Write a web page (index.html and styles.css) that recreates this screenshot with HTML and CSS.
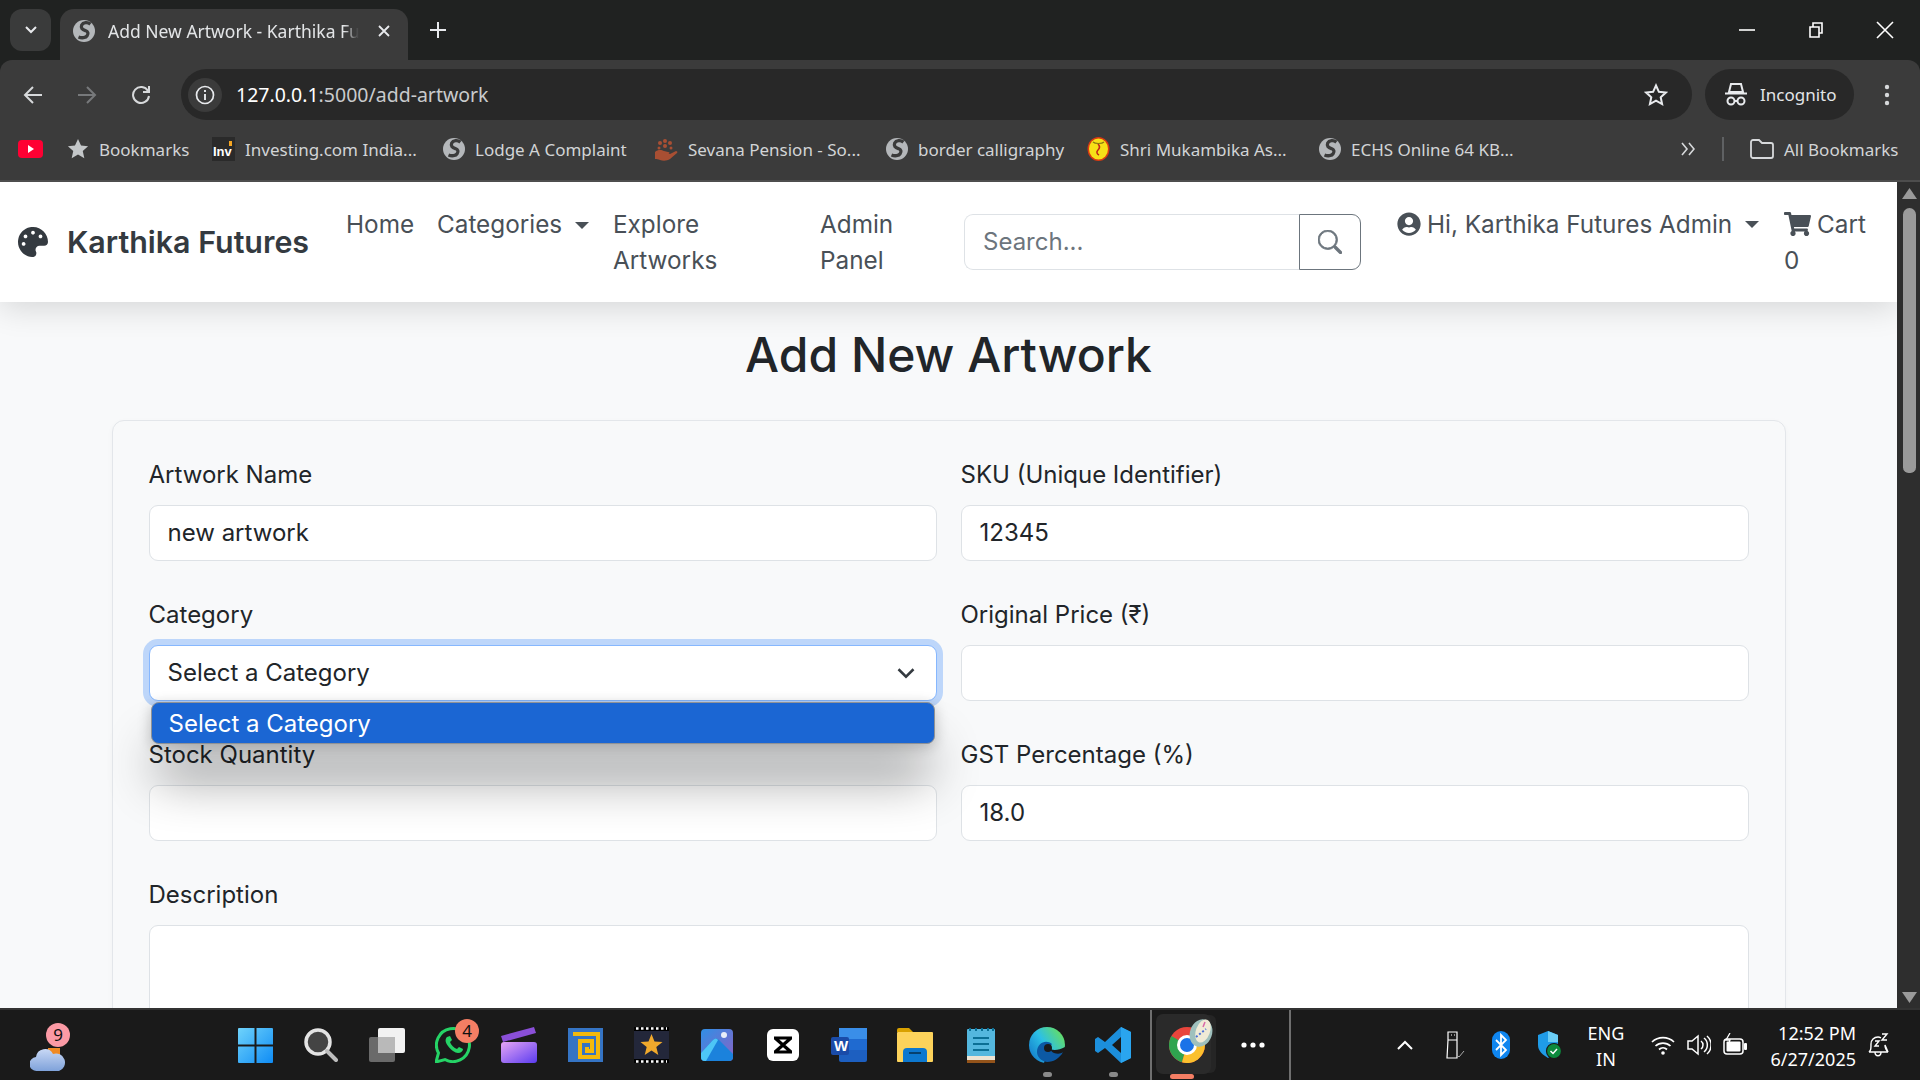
FILE: index.html
```html
<!DOCTYPE html>
<html lang="en">
<head>
<meta charset="utf-8">
<title>Add New Artwork - Karthika Futures</title>
<link rel="stylesheet" href="styles.css">
</head>
<body>
<svg class="defs" width="0" height="0" aria-hidden="true">
  <defs>
    <symbol id="globe" viewBox="0 0 24 24">
      <circle cx="12" cy="12" r="12" fill="#b4b7ba"/>
      <path d="M19 4.500c-3-2.500-8-2-9.500 1-1.300 3 .5 5 4 6 3 1 3.500 3.500 2 5.500-1.500 2.500-6 3-9.500 1.500" fill="none" stroke="#3b3b3b" stroke-width="3.600"/>
    </symbol>
  </defs>
</svg>

<header class="browser">
  <div class="tabstrip">
    <button class="tab-search"><svg width="14" height="10" viewBox="0 0 14 10"><path d="M2 2l5 5 5-5" fill="none" stroke="#e8eaed" stroke-width="2"/></svg></button>
    <div class="tab">
      <svg class="tab-globe"><use href="#globe"/></svg>
      <span class="tab-title">Add New Artwork - Karthika Futures</span>
      <svg class="tab-close" width="14" height="14" viewBox="0 0 14 14"><path d="M2 2l10 10M12 2L2 12" stroke="#e8eaed" stroke-width="1.800"/></svg>
    </div>
    <svg class="tab-new" width="16" height="16" viewBox="0 0 16 16"><path d="M8 0v16M0 8h16" stroke="#e8eaed" stroke-width="2"/></svg>
    <div class="win-controls">
      <svg width="16" height="16" viewBox="0 0 16 16"><path d="M0 8h16" stroke="#fff" stroke-width="1.600"/></svg>
      <svg width="16" height="16" viewBox="0 0 16 16"><path d="M2 5h9v10H2zM5 5V1h9v10h-3" fill="none" stroke="#fff" stroke-width="1.600"/></svg>
      <svg width="18" height="18" viewBox="0 0 18 18"><path d="M1 1l16 16M17 1L1 17" stroke="#fff" stroke-width="1.600"/></svg>
    </div>
  </div>
  <div class="toolbar">
    <div class="nav-btns">
      <svg width="20" height="20" viewBox="0 0 20 20"><path d="M19 10H2M10 2l-8 8 8 8" fill="none" stroke="#d7d9db" stroke-width="2"/></svg>
      <svg width="20" height="20" viewBox="0 0 20 20"><path d="M1 10h17M10 2l8 8-8 8" fill="none" stroke="#77797b" stroke-width="2"/></svg>
      <svg width="20" height="20" viewBox="0 0 20 20"><path d="M17 6a8 8 0 1 0 1 5M18 1v6h-6" fill="none" stroke="#d7d9db" stroke-width="2"/></svg>
    </div>
    <div class="omnibox">
      <span class="info-pill"><svg width="20" height="20" viewBox="0 0 20 20"><circle cx="10" cy="10" r="8.500" fill="none" stroke="#e8eaed" stroke-width="1.700"/><path d="M10 9v6M10 5v2" stroke="#e8eaed" stroke-width="1.900"/></svg></span>
      <span class="url"><b class="url-host">127.0.0.1</b>:5000/add-artwork</span>
      <svg class="omni-star" width="24" height="24" viewBox="0 0 24 24"><path d="M12 2.500l2.900 6.300 6.900.8-5.100 4.700 1.400 6.800-6.100-3.400-6.100 3.400 1.400-6.800-5.100-4.700 6.900-.8z" fill="none" stroke="#e8eaed" stroke-width="2"/></svg>
    </div>
    <div class="incognito">
      <svg width="22" height="24" viewBox="0 0 22 24"><path d="M6 1h10l2 8H4zM0 10.500h22" fill="none" stroke="#e8eaed" stroke-width="2"/><circle cx="6" cy="18" r="3.500" fill="none" stroke="#e8eaed" stroke-width="2"/><circle cx="16" cy="18" r="3.500" fill="none" stroke="#e8eaed" stroke-width="2"/><path d="M9 18h4" stroke="#e8eaed" stroke-width="2"/></svg>
      <span>Incognito</span>
    </div>
    <svg class="kebab" width="6" height="22" viewBox="0 0 6 22"><circle cx="3" cy="3" r="2.200" fill="#d7d9db"/><circle cx="3" cy="11" r="2.200" fill="#d7d9db"/><circle cx="3" cy="19" r="2.200" fill="#d7d9db"/></svg>
  </div>
  <div class="bookmarks">
    <span class="bm bm-yt"><svg width="25" height="18" viewBox="0 0 25 18"><rect width="25" height="18" rx="4" fill="#ff0033"/><path d="M10 5l6 4-6 4z" fill="#fff"/></svg></span>
    <span class="bm bm-a"><svg width="22" height="22" viewBox="0 0 24 24"><path d="M12 1l3.300 7.300 7.700.8-5.800 5.200 1.700 7.700-6.900-4-6.900 4 1.700-7.700L1 9.100l7.700-.8z" fill="#c4c7c9"/></svg><span>Bookmarks</span></span>
    <span class="bm bm-b"><svg width="23" height="24" viewBox="0 0 23 24"><rect width="23" height="24" fill="#2a2a2a"/><text x="1" y="19" class="inv-text">Inv</text><rect x="17" y="4" width="3" height="5" fill="#f5a623"/></svg><span>Investing.com India...</span></span>
    <span class="bm bm-c"><svg width="22" height="22"><use href="#globe"/></svg><span>Lodge A Complaint</span></span>
    <span class="bm bm-d"><svg width="25" height="25" viewBox="0 0 25 25"><path d="M2 15c3-3 7-2 9-1l4 1c2 0 2 2 0 2l-3 0 5 0 6-3c1 0 2 1 1 2l-7 6c-3 2-7 2-10 1-2-1-3-1-5-1z" fill="#a84f33"/><circle cx="12" cy="4" r="2" fill="#a84f33"/><circle cx="7" cy="6" r="2" fill="#a84f33"/><circle cx="17" cy="6" r="2" fill="#a84f33"/><circle cx="12" cy="9" r="2" fill="#a84f33"/><circle cx="6" cy="11" r="1.500" fill="#a84f33"/><circle cx="18" cy="11" r="1.500" fill="#a84f33"/></svg><span>Sevana Pension - So...</span></span>
    <span class="bm bm-e"><svg width="22" height="22"><use href="#globe"/></svg><span>border calligraphy</span></span>
    <span class="bm bm-f"><svg width="23" height="24" viewBox="0 0 23 24"><ellipse cx="11.500" cy="12" rx="11" ry="12" fill="#d93a12"/><ellipse cx="11.500" cy="12" rx="9.500" ry="10.500" fill="#f7e017"/><path d="M11 7c2 2 2 4 0 6s-1 4 1 5" fill="none" stroke="#c2261a" stroke-width="1.600"/><path d="M6 5c2 2 9 2 11 0" fill="none" stroke="#8a7a12" stroke-width="1.200"/></svg><span>Shri Mukambika As...</span></span>
    <span class="bm bm-g"><svg width="22" height="22"><use href="#globe"/></svg><span>ECHS Online 64 KB...</span></span>
    <svg class="bm-more" width="14" height="14" viewBox="0 0 14 14"><path d="M1 1l5 6-5 6M8 1l5 6-5 6" fill="none" stroke="#d7d9db" stroke-width="1.600"/></svg>
    <span class="bm-sep"></span>
    <span class="bm bm-all"><svg width="24" height="20" viewBox="0 0 24 20"><path d="M1 3a2 2 0 0 1 2-2h6l3 3h9a2 2 0 0 1 2 2v11a2 2 0 0 1-2 2H3a2 2 0 0 1-2-2z" fill="none" stroke="#d7d9db" stroke-width="1.800"/></svg><span>All Bookmarks</span></span>
  </div>
</header>

<div class="viewport">
  <main class="page">
    <nav class="navbar">
      <a class="brand">
        <svg width="30" height="30" viewBox="0 0 512 512"><path fill="#343a40" d="M204.300 5C104.900 24.400 24.800 104.300 5.200 203.400c-37 187 131.700 326.400 258.800 306.700 41.200-6.400 61.400-54.600 42.500-91.700-23.100-45.400 9.900-98.400 60.900-98.400h79.700c35.800 0 64.800-29.600 64.900-65.300C511.500 97.100 368.100-26.900 204.300 5zM96 320c-17.700 0-32-14.300-32-32s14.300-32 32-32 32 14.300 32 32-14.300 32-32 32zm32-128c-17.700 0-32-14.300-32-32s14.300-32 32-32 32 14.300 32 32-14.300 32-32 32zm128-64c-17.700 0-32-14.300-32-32s14.300-32 32-32 32 14.300 32 32-14.300 32-32 32zm128 64c-17.700 0-32-14.300-32-32s14.300-32 32-32 32 14.300 32 32-14.300 32-32 32z"/></svg>
        <span>Karthika Futures</span>
      </a>
      <a class="nav-link nl-home">Home</a>
      <a class="nav-link nl-cat">Categories <i class="caret"></i></a>
      <a class="nav-link nl-explore">Explore Artworks</a>
      <a class="nav-link nl-admin">Admin Panel</a>
      <form class="search">
        <span class="search-input">Search...</span>
        <span class="search-btn"><svg width="24" height="24" viewBox="0 0 16 16"><path fill="#6c757d" stroke="#6c757d" stroke-width=".5" d="M11.742 10.344a6.500 6.500 0 1 0-1.397 1.398h-.001c.03.04.062.078.098.115l3.850 3.850a1 1 0 0 0 1.415-1.414l-3.850-3.850a1.007 1.007 0 0 0-.115-.1zM12 6.500a5.500 5.500 0 1 1-11 0 5.500 5.500 0 0 1 11 0z"/></svg></span>
      </form>
      <a class="nav-link nl-user">
        <svg width="24" height="24" viewBox="0 0 496 512"><path fill="#495057" d="M248 8C111 8 0 119 0 256s111 248 248 248 248-111 248-248S385 8 248 8zm0 96c48.600 0 88 39.400 88 88s-39.400 88-88 88-88-39.400-88-88 39.400-88 88-88zm0 344c-58.700 0-111.300-26.600-146.500-68.200 18.800-35.400 55.600-59.800 98.500-59.800 2.400 0 4.800.4 7.100 1.100 13 4.200 26.600 6.900 40.900 6.900 14.300 0 28-2.700 40.900-6.900 2.300-.7 4.700-1.100 7.100-1.100 42.900 0 79.700 24.400 98.500 59.800C359.300 421.400 306.700 448 248 448z"/></svg>
        <span>Hi, Karthika Futures Admin</span><i class="caret"></i>
      </a>
      <a class="nav-link nl-cart">
        <span class="cart-line"><svg width="27" height="24" viewBox="0 0 576 512"><path fill="#495057" d="M528.120 301.319l47.273-208C578.806 78.301 567.391 64 551.990 64H159.208l-9.166-44.810C147.758 8.021 137.930 0 126.529 0H24C10.745 0 0 10.745 0 24v16c0 13.255 10.745 24 24 24h69.883l70.248 343.435C147.325 417.100 136 435.222 136 456c0 30.928 25.072 56 56 56s56-25.072 56-56c0-15.674-6.447-29.835-16.824-40h209.647C430.447 426.165 424 440.326 424 456c0 30.928 25.072 56 56 56s56-25.072 56-56c0-22.172-12.888-41.332-31.579-50.405l5.517-24.276c3.413-15.018-8.002-29.319-23.403-29.319H218.117l-6.545-32h293.145c11.206 0 20.920-7.754 23.403-18.681z"/></svg>Cart</span>
        <span>0</span>
      </a>
    </nav>

    <h1 class="title">Add New Artwork</h1>

    <section class="card">
      <div class="grid">
        <div class="field"><label>Artwork Name</label><div class="control">new artwork</div></div>
        <div class="field"><label>SKU (Unique Identifier)</label><div class="control">12345</div></div>
        <div class="field">
          <label>Category</label>
          <div class="select-wrap">
            <div class="control select-focus">Select a Category
              <svg width="20" height="20" viewBox="0 0 16 16"><path d="M2 5l6 6 6-6" fill="none" stroke="#343a40" stroke-width="2"/></svg>
            </div>
            <div class="dropdown">Select a Category</div>
          </div>
        </div>
        <div class="field"><label>Original Price (₹)</label><div class="control"></div></div>
        <div class="field"><label>Stock Quantity</label><div class="control"></div></div>
        <div class="field"><label>GST Percentage (%)</label><div class="control">18.0</div></div>
        <div class="field field-wide"><label>Description</label><div class="control textarea"></div></div>
      </div>
    </section>
  </main>
  <aside class="scrollbar">
    <svg width="15" height="11" viewBox="0 0 15 11"><path d="M7.500 0l7.500 11H0z" fill="#9a9a9a"/></svg>
    <span class="thumb"></span>
    <svg class="scroll-down" width="15" height="11" viewBox="0 0 15 11"><path d="M0 0h15L7.500 11z" fill="#9a9a9a"/></svg>
  </aside>
</div>

<footer class="taskbar">
  <div class="weather">
    <svg width="36" height="26" viewBox="0 0 36 26"><defs><linearGradient id="cl" x1="0" y1="0" x2="0" y2="1"><stop offset="0" stop-color="#c8d8f5"/><stop offset="1" stop-color="#7fa2da"/></linearGradient></defs><rect x="18" y="2" width="12" height="10" fill="#f08a24"/><path d="M7 25a7 7 0 0 1-1-14 9 9 0 0 1 17-3 8 8 0 0 1 6 17z" fill="url(#cl)"/></svg>
    <span class="badge badge-pink">9</span>
  </div>
  <div class="apps">
    <span class="app"><svg width="35" height="35" viewBox="0 0 35 35"><defs><linearGradient id="w" x1="0" y1="0" x2="1" y2="1"><stop offset="0" stop-color="#6fd3fb"/><stop offset="1" stop-color="#0f8cf5"/></linearGradient></defs><path fill="url(#w)" d="M0 1a1 1 0 0 1 1-1h15.500v16.500H0zM18.500 0H34a1 1 0 0 1 1 1v15.500H18.500zM0 18.500h16.500V35H1a1 1 0 0 1-1-1zM18.500 18.500H35V34a1 1 0 0 1-1 1H18.500z"/></svg></span>
    <span class="app"><svg width="34" height="34" viewBox="0 0 34 34"><circle cx="14" cy="14" r="12" fill="#444" stroke="#e4e4e4" stroke-width="3.500"/><path d="M23 23l9 9" stroke="#bdbdbd" stroke-width="4" stroke-linecap="round"/></svg></span>
    <span class="app"><svg width="36" height="34" viewBox="0 0 36 34"><rect y="9" width="26" height="25" rx="2" fill="#6a6a6a"/><rect x="9" width="27" height="25" rx="2" fill="#f2f2f2"/><rect x="9" y="9" width="17" height="16" fill="#b9b9b9"/></svg></span>
    <span class="app app-badged"><svg width="36" height="36" viewBox="0 0 36 36"><path d="M1 35l2.500-9A16.500 16.500 0 1 1 10 32.500z" fill="#1a1a1a" stroke="#25d366" stroke-width="3"/><path d="M12 10c-2 2-2 5 1 9s7 7 10 7 5-2 5-4l-4-2-2 2c-3-1-6-4-7-7l2-2-2-4z" fill="#25d366"/></svg><span class="badge badge-orange">4</span></span>
    <span class="app"><svg width="36" height="36" viewBox="0 0 36 36"><defs><linearGradient id="cc" x1="0" y1="0" x2="1" y2="1"><stop offset="0" stop-color="#e6a6f5"/><stop offset="1" stop-color="#5a3bf0"/></linearGradient></defs><path d="M0 9L33 0l2 6L2 15z" fill="#8a4fd8"/><rect y="15" width="36" height="21" rx="3" fill="url(#cc)"/></svg></span>
    <span class="app"><svg width="35" height="34" viewBox="0 0 35 34"><rect width="35" height="34" fill="#3574c4"/><path d="M5 6h25v23H12V13h12v10h-5v-4" fill="none" stroke="#f3b90c" stroke-width="4"/></svg></span>
    <span class="app"><svg width="35" height="36" viewBox="0 0 35 36"><rect width="35" height="36" fill="#000"/><rect y="4" width="35" height="28" fill="#23273a"/><path d="M2 1.500h31M2 34.500h31" stroke="#fff" stroke-width="2.500" stroke-dasharray="2.500 2.500"/><path d="M17.500 7l3 7.500 8 .5-6.200 5 2 8-6.800-4.500L10.700 28l2-8-6.200-5 8-.5z" fill="#f0a92c"/></svg></span>
    <span class="app"><svg width="32" height="32" viewBox="0 0 32 32"><defs><linearGradient id="ph" x1="0" y1="0" x2="1" y2="1"><stop offset="0" stop-color="#2f8fe6"/><stop offset="1" stop-color="#8a62c4"/></linearGradient></defs><rect width="32" height="32" rx="4" fill="url(#ph)"/><path d="M0 24l12-13q3-3 6 0l14 14v3a4 4 0 0 1-4 4H4a4 4 0 0 1-4-4z" fill="#1b82dc"/><path d="M0 24l12-13q3-3 5 0L5 32H4a4 4 0 0 1-4-4z" fill="#4dc6f6"/><circle cx="23" cy="6" r="3" fill="#e8eef8"/></svg></span>
    <span class="app"><svg width="32" height="32" viewBox="0 0 32 32"><rect width="32" height="32" rx="6" fill="#fff"/><path d="M7 9h18M7 23h18M8 9l16 14M24 9L8 23" stroke="#000" stroke-width="3.200" fill="none"/></svg></span>
    <span class="app"><svg width="36" height="34" viewBox="0 0 36 34"><rect x="8" width="28" height="34" rx="2" fill="#1d5fc0"/><rect x="8" width="28" height="11" fill="#3a8ee8"/><rect x="8" y="11" width="28" height="11" fill="#1f6ad0"/><rect y="9" width="18" height="18" rx="2" fill="#1a4ba8"/><text x="3" y="23" class="word-w">W</text></svg></span>
    <span class="app"><svg width="36" height="34" viewBox="0 0 36 34"><path d="M0 2a2 2 0 0 1 2-2h10l4 4h-16z" fill="#d9a100"/><rect y="4" width="36" height="30" rx="1" fill="#fdd35b"/><path d="M6 34V24a4 4 0 0 1 4-4h16a4 4 0 0 1 4 4v10z" fill="#0d78cf"/><rect x="12" y="24" width="12" height="2" fill="#06416f"/></svg></span>
    <span class="app"><svg width="28" height="36" viewBox="0 0 28 36"><rect y="2" width="28" height="30" rx="1" fill="#54b7de"/><rect y="29" width="28" height="4" fill="#ece4d4"/><rect y="33" width="28" height="3" fill="#93531a"/><path d="M6 11h16M6 17h16M6 23h16" stroke="#0b6f95" stroke-width="2"/><path d="M3 4V1M9 4V1M15 4V1M21 4V1M26 4V1" stroke="#0b6f95" stroke-width="2"/></svg></span>
    <span class="app app-dot"><svg width="36" height="36" viewBox="0 0 36 36"><defs><linearGradient id="ed" x1="0" y1="1" x2="1" y2="0.300"><stop offset="0" stop-color="#0f6fc6"/><stop offset="0.550" stop-color="#2cc0e6"/><stop offset="1" stop-color="#63dc68"/></linearGradient></defs><circle cx="18" cy="18" r="18" fill="url(#ed)"/><path d="M36 20c-7 4-15 4-16 0L15 36h21z" fill="#1a1a1a"/><path d="M8 25c0-9 9-13 15-8-3 3-2 7 2 9 3 1 7 1 9-1-3 6-9 10-16 10-6-1-10-5-10-10z" fill="#0c59a4"/><circle cx="19" cy="21" r="4" fill="#1a1a1a"/><path d="M34 25c-3 6-9 11-16 11 5 0 9-1 12-4z" fill="#1a1a1a"/></svg></span>
    <span class="app app-dot"><svg width="36" height="36" viewBox="0 0 36 36"><path d="M26 0l10 5v26l-10 5-16-15-7 5-3-2V12l3-2 7 5zM26 10l-9 8 9 8z" fill="#1c8fdc" fill-rule="evenodd"/><path d="M26 0l10 5v26l-10 5z" fill="#2aa5ef"/></svg></span>
    <span class="app app-chrome">
      <svg width="36" height="36" viewBox="0 0 36 36"><circle cx="18" cy="18" r="18" fill="#e8453c"/><path d="M18 18L2.400 9A18 18 0 0 0 13 35.300z" fill="#2fa44f"/><path d="M18 18h18a18 18 0 0 1-23 17.300z" fill="#fbc02d"/><circle cx="18" cy="18" r="8.500" fill="#1a73e8" stroke="#fff" stroke-width="3"/></svg>
      <svg class="chrome-over" width="26" height="30" viewBox="0 0 26 30"><ellipse cx="13" cy="15" rx="11" ry="14" transform="rotate(20 13 15)" fill="#9fc0bd"/><ellipse cx="15" cy="13" rx="7" ry="12" transform="rotate(20 15 13)" fill="#f0ead6"/><path d="M8 19l10-8" stroke="#4a6fd8" stroke-width="2" stroke-dasharray="2 2"/><path d="M15 9l2-5" stroke="#d867a8" stroke-width="1.500"/></svg>
    </span>
    <span class="app app-more"><svg width="24" height="6" viewBox="0 0 24 6"><circle cx="3" cy="3" r="2.600" fill="#fff"/><circle cx="12" cy="3" r="2.600" fill="#fff"/><circle cx="21" cy="3" r="2.600" fill="#fff"/></svg></span>
  </div>
  <div class="tray">
    <svg class="t-chev" width="16" height="10" viewBox="0 0 16 10"><path d="M1 9l7-7 7 7" fill="none" stroke="#fff" stroke-width="2"/></svg>
    <svg class="t-usb" width="19" height="28" viewBox="0 0 19 28"><path d="M2 9h9v18H1zM2 1h9v8H2z" fill="none" stroke="#fff" stroke-width="1.200"/><path d="M5 4h1M8 4h1" stroke="#fff"/><path d="M11 24l2 2 5-6" fill="none" stroke="#aaa"/></svg>
    <svg class="t-bt" width="18" height="28" viewBox="0 0 18 28"><rect width="18" height="28" rx="9" fill="#0f86f0"/><path d="M4 9l10 10-5 5V4l5 5L4 19" fill="none" stroke="#fff" stroke-width="1.800"/></svg>
    <svg class="t-shield" width="24" height="28" viewBox="0 0 24 28"><path d="M10 0l10 4v10c0 6-5 10-10 13C5 24 0 20 0 14V4z" fill="#1f9ce8"/><path d="M10 0l10 4v7H10z" fill="#6bcdf5"/><circle cx="16" cy="20" r="7.500" fill="#0c8a3d" stroke="#1a1a1a" stroke-width="1.200"/><path d="M12.500 20l2.500 2.500 4-4.500" fill="none" stroke="#fff" stroke-width="1.500"/></svg>
    <div class="t-lang"><span>ENG</span><span>IN</span></div>
    <svg class="t-wifi" width="24" height="20" viewBox="0 0 24 20"><path d="M1 7a16 16 0 0 1 22 0M4.500 11a11 11 0 0 1 15 0M8 14.500a6 6 0 0 1 8 0" fill="none" stroke="#fff" stroke-width="1.700"/><circle cx="12" cy="18" r="1.800" fill="#fff"/></svg>
    <svg class="t-vol" width="24" height="22" viewBox="0 0 24 22"><path d="M1 7h4l6-5v18l-6-5H1z" fill="none" stroke="#fff" stroke-width="1.500"/><path d="M14 7a5 5 0 0 1 0 8M17 4a9 9 0 0 1 0 14M20 2a12 12 0 0 1 0 18" fill="none" stroke="#fff" stroke-width="1.500"/></svg>
    <svg class="t-bat" width="24" height="24" viewBox="0 0 24 24"><rect x="1" y="6" width="19" height="15" rx="3" fill="none" stroke="#fff" stroke-width="1.500"/><rect x="3.500" y="8.500" width="14" height="10" rx="1" fill="#fff"/><rect x="21" y="10" width="3" height="7" rx="1" fill="#fff"/><path d="M7 0L3 7h4l-2 6" fill="none" stroke="#fff" stroke-width="1.300"/></svg>
    <div class="t-clock"><span>12:52 PM</span><span>6/27/2025</span></div>
    <svg class="t-bell" width="21" height="24" viewBox="0 0 21 24"><path d="M1 19c2-2 2-3 2-8 0-4 3-7 7-7M10 4c1 0 2 .3 3 .8M17 12c0 4 1 5 3 7zM1 19h19M7 19c0 5 6 5 6 0" fill="none" stroke="#fff" stroke-width="1.400"/><path d="M7 8h4l-4 5h4M14 1h5l-5 6h5" fill="none" stroke="#fff" stroke-width="1.400"/></svg>
  </div>
</footer>
</body>
</html>
```
FILE: styles.css
```css
* { box-sizing: border-box; }
html, body { margin: 0; height: 100%; overflow: hidden; }
body { display: flex; flex-direction: column; height: 100vh; font-family: Inter, "Liberation Sans", sans-serif; background: #f8f9fa; color: #212529; }
.defs { position: absolute; }
svg { display: block; flex: none; }

/* browser chrome */
.browser { flex: none; height: 182px; background: #202221; font-family: "Noto Sans", "Open Sans", sans-serif; color: #e3e5e7; }
.tabstrip { height: 60px; display: flex; align-items: flex-start; padding: 9px 0 0 10px; }
.tab-search { width: 41px; height: 42px; border: 0; padding: 0; border-radius: 12px; background: #3a3b3b; display: flex; align-items: center; justify-content: center; }
.tab { width: 348px; height: 51px; margin-left: 9px; background: #3b3b3b; border-radius: 14px 14px 0 0; display: flex; align-items: center; padding: 0 17px 7px 13px; }
.tab-globe { width: 22px; height: 22px; }
.tab-title { width: 252px; margin-left: 13px; white-space: nowrap; overflow: hidden; font-size: 17.500px; -webkit-mask-image: linear-gradient(90deg, #000 94%, transparent); mask-image: linear-gradient(90deg, #000 94%, transparent); }
.tab-close { margin-left: 18px; }
.tab-new { margin: 13px 0 0 22px; }
.win-controls { margin-left: auto; display: flex; align-items: center; height: 41px; padding-right: 26px; gap: 53px; }
.win-controls svg:last-child { margin-left: -1px; }

.toolbar { height: 62px; background: #3b3b3b; border-radius: 12px 12px 0 0; display: flex; align-items: flex-start; padding: 9px 0 0 23px; }
.nav-btns { display: flex; gap: 34px; margin-top: 16px; }
.omnibox { width: 1511px; height: 51px; margin-left: 30px; background: #282828; border-radius: 26px; display: flex; align-items: center; padding: 0 24px 0 7px; }
.info-pill { width: 34px; height: 34px; border-radius: 50%; background: #3b3b3b; display: flex; align-items: center; justify-content: center; }
.url { margin-left: 14px; font-size: 19.500px; color: #c9cbcd; }
.url-host { font-weight: 400; color: #fff; }
.omni-star { margin-left: auto; }
.incognito { width: 149px; height: 51px; margin-left: 13px; border-radius: 26px; background: #282828; display: flex; align-items: center; padding-left: 20px; gap: 13px; font-size: 17px; }
.kebab { margin: 15px 0 0 30px; }

.bookmarks { height: 60px; background: #3b3b3b; border-bottom: 2px solid #4d4d4d; display: flex; align-items: center; padding: 0 0 4px 18px; font-size: 17px; color: #d2d4d6; }
.bm { display: flex; align-items: center; gap: 10px; white-space: nowrap; }
.bm-yt { width: 49px; }
.bm-a { width: 145px; }
.bm-b { width: 231px; }
.bm-c { width: 210px; }
.bm-d { width: 233px; }
.bm-e { width: 201px; }
.bm-f { width: 232px; }
.bm-g { width: 362px; }
.bm-more { flex: none; }
.bm-sep { width: 2px; height: 24px; margin-left: 27px; background: #5f6163; }
.bm-all { margin-left: 26px; }
.inv-text { font: 700 13px "Liberation Sans", sans-serif; fill: #fff; }
.word-w { font: 700 15px "Liberation Sans", sans-serif; fill: #fff; }

/* page */
.viewport { flex: 1; min-height: 0; display: flex; }
.page { flex: 1; min-width: 0; overflow: hidden; }
.navbar { height: 120px; background: #fff; display: flex; align-items: flex-start; padding: 24px 0 0 18px; box-shadow: 0 6px 30px rgba(0,0,0,.14); position: relative; font-size: 24.300px; line-height: 36px; }
.brand { width: 316px; height: 49px; display: flex; align-items: center; gap: 19px; font-size: 30.400px; font-weight: 600; color: #343a40; white-space: nowrap; align-self: center; margin-bottom: 24px; }
.nav-link { display: block; padding: 0 12px; color: #495057; flex: none; }
.nl-home { width: 91px; }
.nl-cat { width: 176px; }
.nl-explore { width: 207px; }
.nl-admin { width: 156px; }
.nl-user { width: 387px; margin-left: 24px; display: flex; align-items: flex-start; white-space: nowrap; gap: 6px; }
.nl-user svg { margin-top: 6px; }
.nl-user .caret { margin: 15px 0 0 7px; }
.nl-cart { width: 112px; }
.cart-line { display: flex; align-items: center; gap: 6px; }
.caret { display: inline-block; width: 0; height: 0; margin-left: 6px; vertical-align: 4px; border: 7px solid transparent; border-top-color: #495057; border-bottom: 0; }

.search { width: 397px; height: 56px; margin-top: 8px; display: flex; font-size: 24px; }
.search-input { flex: 1; border: 1px solid #dee2e6; border-right: 0; border-radius: 9px 0 0 9px; padding: 9px 18px; color: #6c757d; }
.search-btn { width: 62px; border: 1px solid #6c757d; border-radius: 0 9px 9px 0; display: flex; align-items: center; justify-content: center; }

.title { margin: 24px 0 36px; text-align: center; font-size: 48px; font-weight: 500; line-height: 58px; color: #212529; }
.card { max-width: 1674px; margin: 0 auto; padding: 36px; background: #f8f9fa; border: 1px solid #e3e6ea; border-radius: 12px; box-shadow: 0 2px 6px rgba(0,0,0,.03); font-size: 24px; line-height: 36px; }
.grid { display: grid; grid-template-columns: 788px 788px; column-gap: 24px; }
.field { margin-bottom: 36px; }
.field-wide { grid-column: 1 / -1; }
.field label { display: block; margin-bottom: 12px; color: #212529; }
.control { height: 56px; padding: 9px 18px; background: #fff; border: 1px solid #dee2e6; border-radius: 9px; color: #212529; }
.textarea { height: 200px; }
.select-wrap { position: relative; }
.select-focus { display: flex; align-items: center; justify-content: space-between; padding-right: 20px; border-color: #86b7fe; box-shadow: 0 0 0 6px rgba(13,110,253,.25); }
.dropdown { position: absolute; top: 57px; left: 2px; right: 2px; height: 42px; padding: 3px 17px 1px; background: #1b66d3; color: #fff; border: 1px solid #8f9296; border-radius: 8px; box-shadow: 0 3px 14px rgba(0,0,0,.22), 0 40px 50px -6px rgba(0,0,0,.45); line-height: 36px; z-index: 2; }

.scrollbar { flex: none; width: 23px; background: #2e2e2e; display: flex; flex-direction: column; align-items: center; padding: 6px 0 0 1px; }
.thumb { width: 13px; height: 265px; margin-top: 9px; border-radius: 7px 7px 6px 6px; background: #9a9a9a; }
.scroll-down { margin-top: auto; margin-bottom: 5px; }

/* taskbar */
.taskbar { flex: none; height: 72px; background: #1a1a1a; border-top: 2px solid #333; display: flex; align-items: center; position: relative; font-family: "Noto Sans", "Open Sans", sans-serif; color: #fff; }
.weather { width: 222px; padding-left: 30px; position: relative; margin-top: 28px; }
.badge { position: absolute; width: 24px; height: 24px; border-radius: 50%; color: #111; font-size: 17px; line-height: 24px; text-align: center; }
.badge-pink { left: 46px; top: -23px; background: #fb9aa5; }
.badge-orange { left: 35px; top: 9px; background: #f47e64; }
.apps { display: flex; align-items: stretch; height: 70px; position: relative; }
.app { width: 66px; display: flex; align-items: center; justify-content: center; position: relative; }
.app-dot::after { content: ""; position: absolute; left: 29px; bottom: 3px; width: 9px; height: 5px; border-radius: 3px; background: #8a8a8a; }
.app-chrome { margin-left: 12px; width: 58px; }
.app-chrome::before { content: ""; position: absolute; left: -2px; top: 4px; width: 55px; height: 60px; border-radius: 7px; background: #2a2a2a; box-shadow: 6px 0 0 -1px #252525; }
.app-chrome svg { position: relative; }
.app-chrome::after { content: ""; position: absolute; left: 12px; bottom: 1px; width: 24px; height: 5px; border-radius: 3px; background: #f47e64; }
.chrome-over { position: absolute !important; left: 30px; top: 8px; }
.apps::after { content: ""; position: absolute; left: 928px; top: 0; width: 2px; height: 70px; background: #6f6f6f; }
.app-more { border-right: 2px solid #6f6f6f; width: 75px; padding-left: 1px; }
.tray { flex: none; display: flex; align-items: center; height: 70px; margin-left: 106px; position: relative; }
.t-usb { margin-left: 33px; }
.t-bt { margin-left: 27px; }
.t-shield { margin-left: 28px; }
.t-lang { width: 60px; margin-left: 14px; display: flex; flex-direction: column; align-items: center; font-size: 18px; line-height: 26px; margin-top: 2px; }
.t-wifi { margin-left: 15px; }
.t-vol { margin-left: 12px; }
.t-bat { margin-left: 12px; }
.t-clock { width: 109px; display: flex; flex-direction: column; align-items: flex-end; font-size: 18px; line-height: 26px; margin-top: 2px; }
.t-bell { margin-left: 12px; }
```
